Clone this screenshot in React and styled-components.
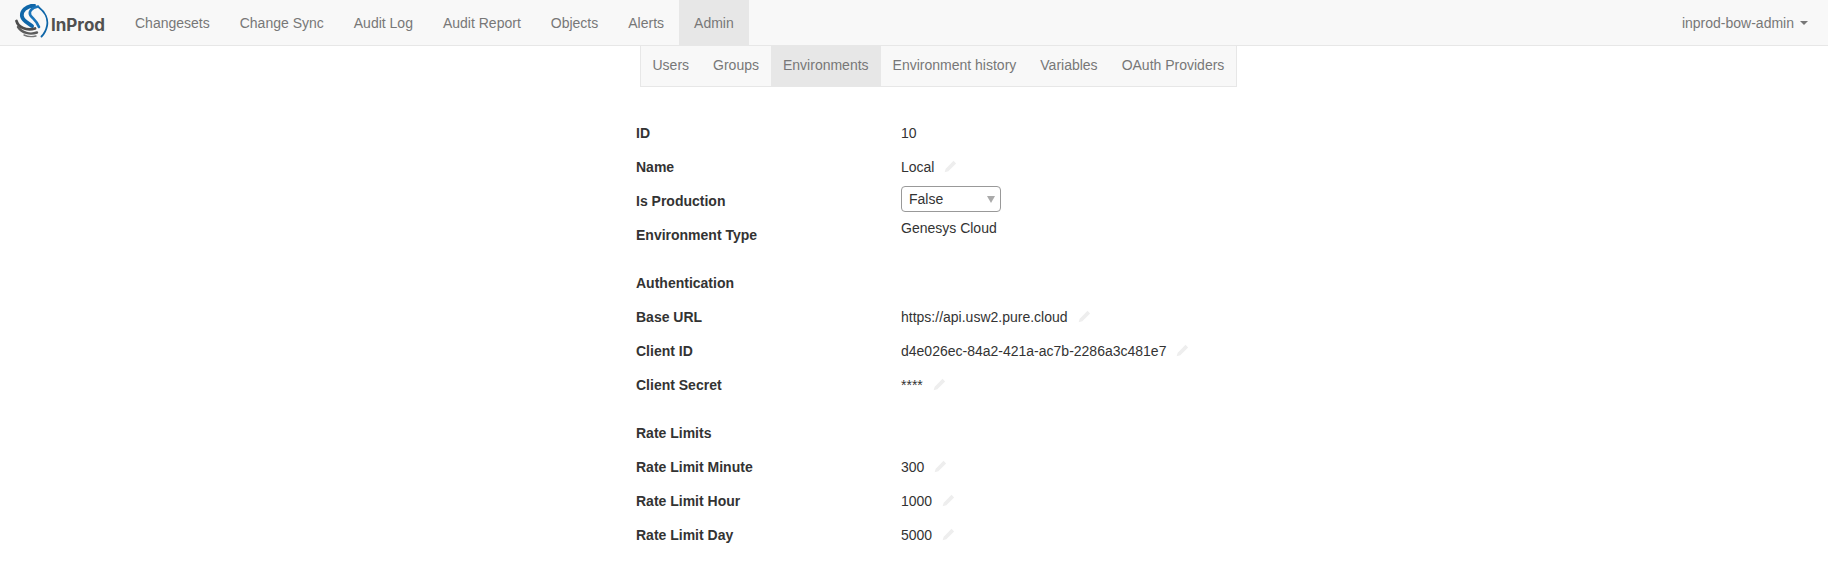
import styled, { createGlobalStyle } from "styled-components";

const GlobalStyle = createGlobalStyle`
  html, body {
    margin: 0;
    background: #fff;
    font-family: "Liberation Sans", Arial, sans-serif;
    font-size: 14px;
    line-height: 20px;
    color: #333;
  }
`;

const Navbar = styled.nav`
  height: 45px;
  display: flex;
  justify-content: space-between;
  background: #f8f8f8;
  border-bottom: 1px solid #e7e7e7;
`;

const NavLeft = styled.div`
  display: flex;
`;

const Brand = styled.a`
  width: 120px;
  box-sizing: border-box;
  padding: 4px 0 0 15px;
  display: flex;
  align-items: flex-start;
`;

const BrandText = styled.span`
  margin: 9px 0 0 2px;
  font-family: Inter, sans-serif;
  font-size: 17px;
  font-weight: 700;
  line-height: 24px;
  color: #505050;
`;

const NavLink = styled.a`
  display: flex;
  align-items: center;
  padding: 0 15px;
  color: #777;
  background: ${(p) => (p.$active ? "#e7e7e7" : "transparent")};
`;

const UserMenu = styled.a`
  display: flex;
  align-items: center;
  padding: 0 20px 0 0;
  color: #777;
`;

const Caret = styled.span`
  width: 0;
  height: 0;
  margin-left: 6px;
  border-top: 4px solid #777;
  border-left: 4px solid transparent;
  border-right: 4px solid transparent;
`;

const Page = styled.main`
  width: 556px;
  margin: 0 auto;
`;

const SubNav = styled.div`
  display: inline-flex;
  height: 40px;
  margin-left: 3.5px;
  white-space: nowrap;
  background: #f8f8f8;
  border: 1px solid #e7e7e7;
  border-top: none;
`;

const SubLink = styled.a`
  display: flex;
  align-items: center;
  padding: 0 12px 2px;
  color: #777;
  background: ${(p) => (p.$active ? "#e7e7e7" : "transparent")};
`;

const Details = styled.div`
  margin-top: 29px;
  display: flex;
  flex-direction: column;
`;

const Section = styled.section`
  margin-bottom: 14px;
`;

const Row = styled.div`
  display: flex;
  height: 34px;
  align-items: center;
`;

const Label = styled.div`
  width: 265px;
  font-weight: 700;
`;

const Value = styled.div`
  display: flex;
  align-items: center;
  gap: 10px;
  ${(p) => p.$raised && "margin-top: -14px;"}
`;

const SelectBox = styled.div`
  width: 100px;
  height: 26px;
  margin-top: -4px;
  box-sizing: border-box;
  padding: 0 5px 0 7px;
  display: flex;
  align-items: center;
  justify-content: space-between;
  background: #fff;
  border: 1px solid #999;
  border-radius: 4px;
`;

const SelectArrow = styled.span`
  width: 0;
  height: 0;
  border-top: 7px solid #aaa;
  border-left: 4px solid transparent;
  border-right: 4px solid transparent;
`;

const EditIcon = styled.svg`
  width: 13px;
  height: 13px;
  margin-top: -2px;
`;

const Logo = () => (
  <svg width="34" height="34" viewBox="0 0 34 34">
    <g fill="none" strokeLinecap="round">
      <path d="M19 1.5C11 2 6 7 7 12.5C8 17 13 19 17 22" stroke="#0f66a8" strokeWidth="3.8" />
      <path d="M23 2.5C16 4 13.5 8 15.5 11.5C18 15 22 17 24 23" stroke="#1a74b8" strokeWidth="2.6" />
      <path d="M24 3.5C30 8 33.5 15 32 22C31 27 29 30 26.5 32.5" stroke="#0f66a8" strokeWidth="1.8" />
      <path d="M1.5 17C3 23 11 27 20 24.5" stroke="#4d4d4d" strokeWidth="2.8" />
      <path d="M3 23C7 29 15 31 22 28.5" stroke="#5c5c5c" strokeWidth="2.4" />
      <path d="M9 31C13 33 17 33 21 32" stroke="#777" strokeWidth="1.4" />
    </g>
  </svg>
);

const Pencil = () => (
  <EditIcon viewBox="0 0 12 12">
    <path d="M8.8 0.8L11.2 3.2L4 10.4L0.6 11.4L1.6 8Z" fill="#eeeeee" />
  </EditIcon>
);

const navItems = ["Changesets", "Change Sync", "Audit Log", "Audit Report", "Objects", "Alerts", "Admin"];
const subItems = ["Users", "Groups", "Environments", "Environment history", "Variables", "OAuth Providers"];

const sections = [
  [
    { label: "ID", value: "10" },
    { label: "Name", value: "Local", edit: true },
    { label: "Is Production", select: "False" },
    { label: "Environment Type", value: "Genesys Cloud", raised: true },
  ],
  [
    { label: "Authentication" },
    { label: "Base URL", value: "https://api.usw2.pure.cloud", edit: true },
    { label: "Client ID", value: "d4e026ec-84a2-421a-ac7b-2286a3c481e7", edit: true },
    { label: "Client Secret", value: "****", edit: true },
  ],
  [
    { label: "Rate Limits" },
    { label: "Rate Limit Minute", value: "300", edit: true },
    { label: "Rate Limit Hour", value: "1000", edit: true },
    { label: "Rate Limit Day", value: "5000", edit: true },
  ],
];

export default function App() {
  return (
    <>
      <GlobalStyle />
      <Navbar>
        <NavLeft>
          <Brand>
            <Logo />
            <BrandText>InProd</BrandText>
          </Brand>
          {navItems.map((item) => (
            <NavLink key={item} $active={item === "Admin"}>
              {item}
            </NavLink>
          ))}
        </NavLeft>
        <UserMenu>
          inprod-bow-admin
          <Caret />
        </UserMenu>
      </Navbar>
      <Page>
        <SubNav>
          {subItems.map((item) => (
            <SubLink key={item} $active={item === "Environments"}>
              {item}
            </SubLink>
          ))}
        </SubNav>
        <Details>
          {sections.map((rows) => (
            <Section key={rows[0].label}>
              {rows.map((row) => (
                <Row key={row.label}>
                  <Label>{row.label}</Label>
                  {row.select && (
                    <SelectBox>
                      {row.select}
                      <SelectArrow />
                    </SelectBox>
                  )}
                  {row.value && (
                    <Value $raised={row.raised}>
                      {row.value}
                      {row.edit && <Pencil />}
                    </Value>
                  )}
                </Row>
              ))}
            </Section>
          ))}
        </Details>
      </Page>
    </>
  );
}
